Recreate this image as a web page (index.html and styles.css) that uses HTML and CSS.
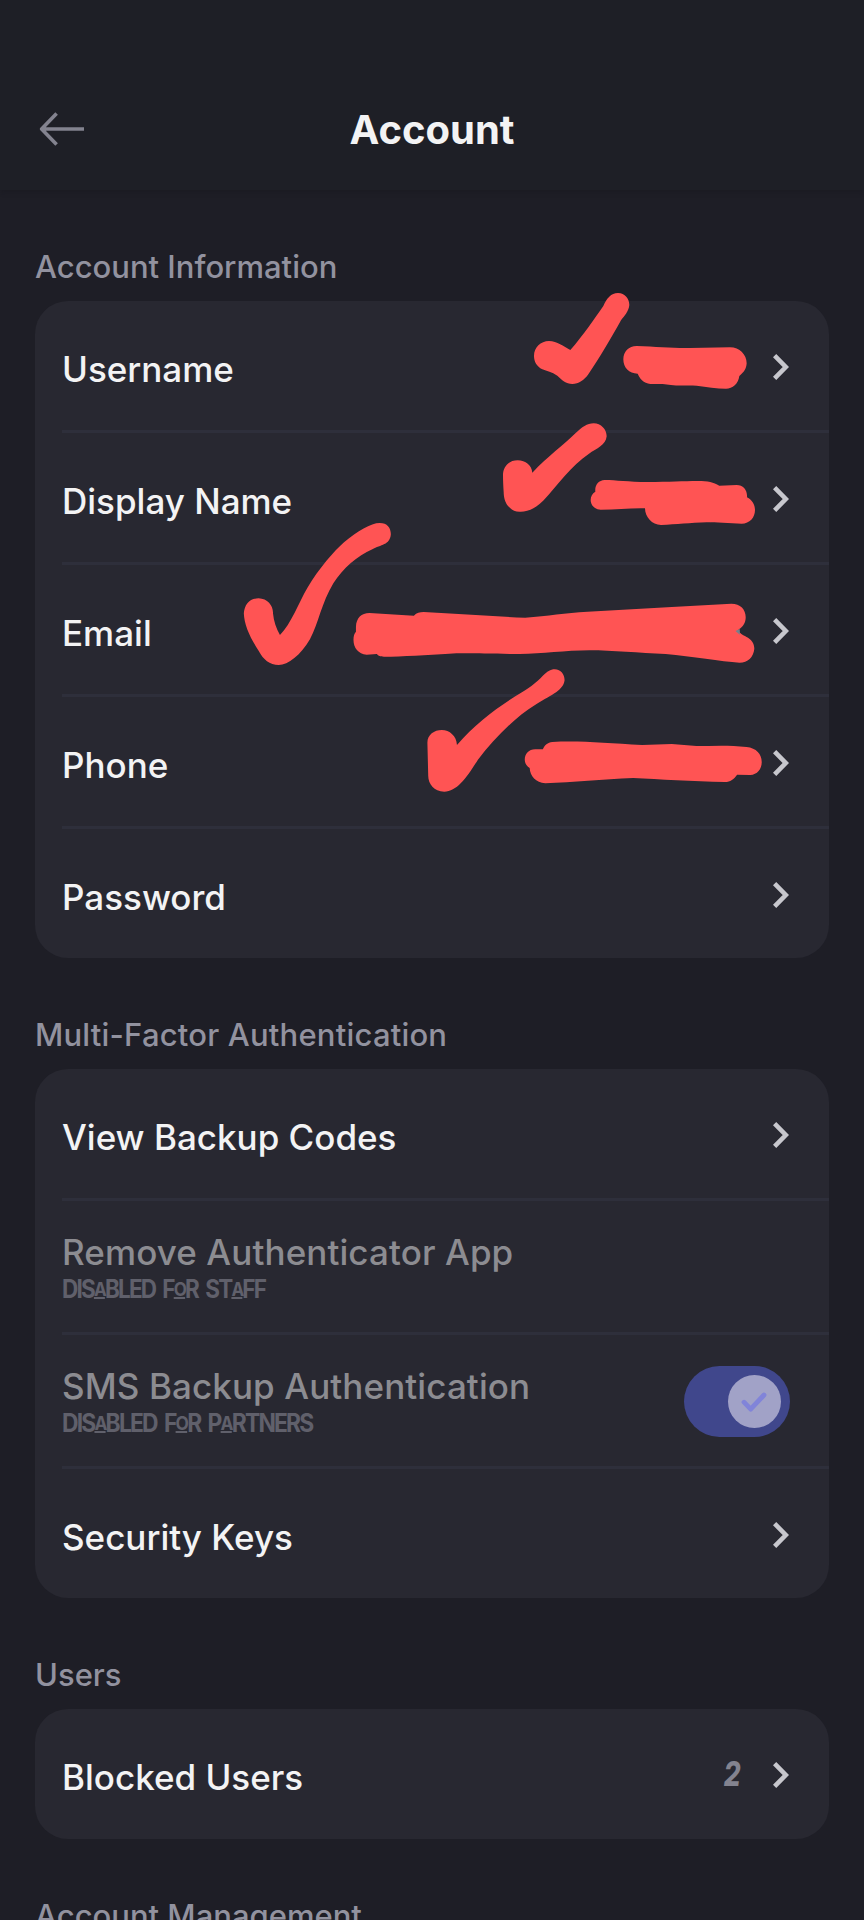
FILE: index.html
```html
<!DOCTYPE html>
<html lang="en">
<head>
<meta charset="utf-8">
<title>Account</title>
<link rel="stylesheet" href="styles.css">
</head>
<body>
<svg class="defs" width="0" height="0" aria-hidden="true">
  <symbol id="chevron" viewBox="0 0 16 26"><path d="M1.6 1.6 12.8 13 1.6 24.4"/></symbol>
</svg>
<div class="screen">
  <header class="header">
    <svg class="back" viewBox="0 0 46 36"><path d="M45 18H3M17.6 2.6 2.6 18 17.6 33.4"/></svg>
    <h1 class="title">Account</h1>
    <span class="spacer"></span>
  </header>
  <main class="content">
    <section>
      <h2 class="heading">Account Information</h2>
      <div class="card">
        <div class="row"><span class="label">Username</span><svg class="chevron"><use href="#chevron"/></svg></div>
        <div class="row"><span class="label">Display Name</span><svg class="chevron"><use href="#chevron"/></svg></div>
        <div class="row"><span class="label">Email</span><svg class="chevron"><use href="#chevron"/></svg></div>
        <div class="row"><span class="label">Phone</span><svg class="chevron"><use href="#chevron"/></svg></div>
        <div class="row"><span class="label">Password</span><svg class="chevron"><use href="#chevron"/></svg></div>
      </div>
    </section>
    <section>
      <h2 class="heading heading-wide">Multi-Factor Authentication</h2>
      <div class="card">
        <div class="row"><span class="label">View Backup Codes</span><svg class="chevron"><use href="#chevron"/></svg></div>
        <div class="row row-tall disabled">
          <div class="stack"><span class="label">Remove Authenticator App</span><span class="note note-staff">DIS<i>A</i>BLED F<i>O</i>R ST<i>A</i>FF</span></div>
        </div>
        <div class="row row-tall disabled">
          <div class="stack"><span class="label">SMS Backup Authentication</span><span class="note note-partners">DIS<i>A</i>BLED F<i>O</i>R P<i>A</i>RTNERS</span></div>
          <span class="toggle"><span class="knob"><svg class="check" viewBox="0 0 26 20"><path d="M3 10.2 9.7 17.2 23 3"/></svg></span></span>
        </div>
        <div class="row"><span class="label">Security Keys</span><svg class="chevron"><use href="#chevron"/></svg></div>
      </div>
    </section>
    <section>
      <h2 class="heading">Users</h2>
      <div class="card">
        <div class="row row-single"><span class="label">Blocked Users</span><span class="count">2</span><svg class="chevron"><use href="#chevron"/></svg></div>
      </div>
    </section>
    <section>
      <h2 class="heading">Account Management</h2>
    </section>
  </main>
  <!-- Marker strokes drawn over the account values -->
  <svg class="marker" viewBox="0 0 864 1920">
    <g transform="translate(480 270) scale(.33333)">
      <path d="M162 258C162 232 182 213 207 213C232 214 250 228 271 240C310 196 345 143 370 108C380 85 393 69 414 69C435 69 448 86 448 105C446 125 433 137 423 151C394 203 358 265 325 313C312 331 296 342 277 342C258 341 245 330 232 317C215 306 201 303 187 298C170 289 162 275 162 258Z"/>
      <path d="M430 268C430 245 446 228 470 228C530 230 580 235 630 234L750 232C779 232 800 254 800 280C799 297 792 306 778 318C775 341 758 356 738 356C710 356 680 350 650 347C620 345 600 348 580 346C560 343 550 342 525 342C501 344 483 335 473 311C447 311 430 293 430 268Z"/>
      <path d="M69 616C69 589 87 571 113 571C137 571 155 586 157 608C205 557 250 526 287 489C306 472 321 460 341 460C363 460 380 478 380 499C377 527 351 534 326 552C274 586 233 646 191 691C163 718 143 725 122 725C104 726 94 719 85 709C75 699 71 680 71 666C70 650 69 632 69 616Z"/>
      <path d="M346 665C344 645 355 631 374 630C408 630 445 636 502 636C570 636 610 633 653 633C685 633 700 637 718 647L770 645C790 645 803 661 801 682C816 690 825 704 825 720C825 743 809 761 785 761C750 760 705 757 680 757C630 759 590 763 543 765C516 765 495 741 495 715C450 714 410 719 362 719C343 718 332 705 332 690C332 679 337 670 346 665Z"/>
    </g>
    <g transform="translate(220 500) scale(.41071 .33333)">
      <path d="M58 340C60 313 72 295 94 295C116 296 130 318 129 340C131 365 137 386 146 405C174 370 190 311 214 261C240 207 278 153 302 127C335 93 367 69 389 69C407 69 416 83 416 103C414 136 391 134 371 148C334 168 300 204 276 250C247 309 240 370 219 418C196 466 166 495 143 495C121 495 105 478 94 452C72 411 59 374 58 340Z"/>
      <path d="M331 380C332 354 344 339 364 339L472 347C479 338 486 336 496 336C580 341 660 349 743 353C799 348 840 339 895 335L1100 321L1245 311C1267 311 1280 328 1280 352C1280 369 1273 382 1263 388C1262 400 1274 405 1281 410C1294 417 1301 431 1301 446C1299 472 1285 488 1265 488C1220 485 1150 469 1085 462C1020 459 955 451 900 451C840 451 785 462 729 462C650 462 600 458 558 461C505 464 443 470 399 470C390 469 386 469 382 462L357 464C337 461 325 444 325 419C325 408 327 401 331 395Z"/>
      <path d="M505 730C504 705 521 690 540 690C559 690 576 708 577 735C620 673 670 627 720 588C748 568 772 547 786 527C797 515 804 508 815 508C830 508 839 523 839 541C836 574 798 590 767 615C717 653 666 718 628 779C601 832 577 875 546 875C521 875 507 851 507 828Z"/>
      <path d="M742 779C742 760 753 747 769 748L786 748C790 736 798 727 809 726C870 721 940 729 1028 735L1100 732L1160 738C1200 738 1240 735 1282 741C1306 744 1319 762 1319 786C1319 808 1308 824 1291 825L1259 824C1252 837 1242 846 1230 846C1150 844 1070 838 1006 834C930 838 860 847 792 850C769 848 755 828 754 804C746 797 742 789 742 779Z"/>
    </g>
    <path class="cursor" d="M735.5 631 739.8 629V634.8Z"/>
  </svg>
</div>
</body>
</html>
```
FILE: styles.css
```css
* { box-sizing: border-box; }
body {
  margin: 0;
  background: #1e1e26;
  font-family: Inter, "Liberation Sans", sans-serif;
}
.defs { position: absolute; }
.screen {
  position: relative;
  width: 864px;
  height: 1920px;
  overflow: hidden;
  background: #1e1e26;
}
.header {
  display: flex;
  align-items: center;
  justify-content: space-between;
  height: 190px;
  padding: 68px 39px 0;
  background: #1e1f26;
  box-shadow: 0 2px 5px rgba(20, 20, 28, .3);
}
.back, .spacer { width: 46px; height: 36px; }
.back { fill: none; stroke: #83838f; stroke-width: 3.6; stroke-linecap: butt; stroke-linejoin: round; }
.title {
  margin: 0;
  padding-top: 1px;
  color: #f3f3f4;
  font-size: 40px;
  font-weight: 700;
  line-height: 48px;
}
.content { padding: 0 35px; }
.heading {
  margin: 0;
  padding: 57px 0 14px;
  color: #92929f;
  font-size: 31px;
  font-weight: 500;
  line-height: 40px;
  white-space: nowrap;
}
.heading-wide { letter-spacing: .2px; }
.card {
  border-radius: 33px;
  background: #282831;
  overflow: hidden;
}
.row {
  display: flex;
  align-items: center;
  height: 132px;
  margin-left: 27px;
  padding-right: 40px;
  border-bottom: 3px solid #2e2f3b;
}
.row:last-child { height: 129px; border-bottom: 0; }
.row-single:last-child { height: 130px; }
.row-tall { height: 134px; padding-right: 39px; }
.label {
  flex: 1;
  padding-top: 6px;
  color: #f3f3f4;
  font-size: 35px;
  font-weight: 500;
  line-height: 44px;
  white-space: nowrap;
}
.chevron {
  width: 16px;
  height: 26px;
  margin-top: 2px;
  fill: none;
  stroke: #c7c7cd;
  stroke-width: 4.6;
}
.stack { display: flex; flex: 1; flex-direction: column; padding-bottom: 2px; }
.disabled .label {
  flex: none;
  margin-bottom: 2px;
  padding-top: 0;
  color: #8c8c91;
  letter-spacing: .1px;
}
.note {
  align-self: flex-start;
  height: 26px;
  color: #60606b;
  font-size: 25px;
  font-weight: 700;
  line-height: 26px;
  letter-spacing: -2px;
  word-spacing: 4px;
  white-space: nowrap;
  transform-origin: left;
}
.note i {
  font-size: 19px;
  font-style: normal;
  text-decoration: underline;
  text-decoration-thickness: 2px;
  text-underline-offset: 1px;
  vertical-align: 2px;
  line-height: 1;
}
.note-staff { transform: scaleX(.9); }
.note-partners { transform: scaleX(.915); }
.toggle {
  display: flex;
  justify-content: flex-end;
  width: 106px;
  height: 71px;
  margin-top: 2px;
  padding: 9px;
  border-radius: 36px;
  background: #40478c;
}
.knob {
  display: flex;
  align-items: center;
  justify-content: center;
  width: 53px;
  height: 53px;
  border-radius: 50%;
  background: #a1a2c7;
}
.check {
  width: 26px;
  height: 20px;
  margin-right: 2px;
  fill: none;
  stroke: #8184d9;
  stroke-width: 4.8;
  stroke-linecap: round;
  stroke-linejoin: round;
}
.count {
  margin-right: 32px;
  color: #83838f;
  font-size: 34px;
  font-style: italic;
  font-weight: 800;
  line-height: 40px;
  transform: scaleX(.78);
  transform-origin: right;
}
.marker {
  position: absolute;
  top: 0;
  left: 0;
  width: 864px;
  height: 1920px;
  fill: #ff5454;
  pointer-events: none;
}
.cursor { fill: #76808c; }
```
